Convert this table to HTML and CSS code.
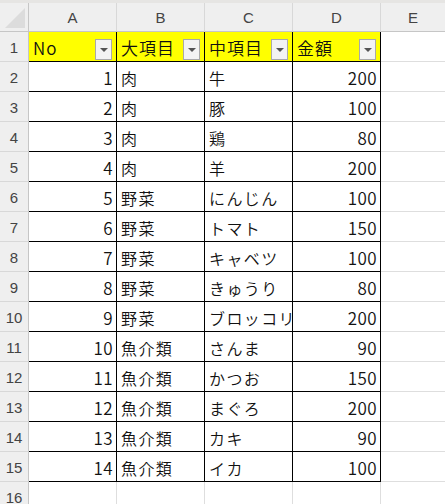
FILE: index.html
```html
<!DOCTYPE html>
<html lang="ja">
<head>
<meta charset="utf-8">
<link rel="stylesheet" href="styles.css">
</head>
<body>
<div class="topstrip"></div>
<div class="sheet">
  <div class="corner"><span class="tri"></span></div>
  <div class="colhead">A</div>
  <div class="colhead">B</div>
  <div class="colhead">C</div>
  <div class="colhead">D</div>
  <div class="colhead last">E</div>

  <div class="rowhead">1</div>
  <div class="cell hdr">No<span class="dd"></span></div>
  <div class="cell hdr">大項目<span class="dd"></span></div>
  <div class="cell hdr">中項目<span class="dd"></span></div>
  <div class="cell hdr">金額<span class="dd"></span></div>
  <div class="cell empty"></div>

  <div class="rowhead">2</div><div class="cell num">1</div><div class="cell">肉</div><div class="cell">牛</div><div class="cell num">200</div><div class="cell empty"></div>
  <div class="rowhead">3</div><div class="cell num">2</div><div class="cell">肉</div><div class="cell">豚</div><div class="cell num">100</div><div class="cell empty"></div>
  <div class="rowhead">4</div><div class="cell num">3</div><div class="cell">肉</div><div class="cell">鶏</div><div class="cell num">80</div><div class="cell empty"></div>
  <div class="rowhead">5</div><div class="cell num">4</div><div class="cell">肉</div><div class="cell">羊</div><div class="cell num">200</div><div class="cell empty"></div>
  <div class="rowhead">6</div><div class="cell num">5</div><div class="cell">野菜</div><div class="cell">にんじん</div><div class="cell num">100</div><div class="cell empty"></div>
  <div class="rowhead">7</div><div class="cell num">6</div><div class="cell">野菜</div><div class="cell">トマト</div><div class="cell num">150</div><div class="cell empty"></div>
  <div class="rowhead">8</div><div class="cell num">7</div><div class="cell">野菜</div><div class="cell">キャベツ</div><div class="cell num">100</div><div class="cell empty"></div>
  <div class="rowhead">9</div><div class="cell num">8</div><div class="cell">野菜</div><div class="cell">きゅうり</div><div class="cell num">80</div><div class="cell empty"></div>
  <div class="rowhead">10</div><div class="cell num">9</div><div class="cell">野菜</div><div class="cell">ブロッコリー</div><div class="cell num">200</div><div class="cell empty"></div>
  <div class="rowhead">11</div><div class="cell num">10</div><div class="cell">魚介類</div><div class="cell">さんま</div><div class="cell num">90</div><div class="cell empty"></div>
  <div class="rowhead">12</div><div class="cell num">11</div><div class="cell">魚介類</div><div class="cell">かつお</div><div class="cell num">150</div><div class="cell empty"></div>
  <div class="rowhead">13</div><div class="cell num">12</div><div class="cell">魚介類</div><div class="cell">まぐろ</div><div class="cell num">200</div><div class="cell empty"></div>
  <div class="rowhead">14</div><div class="cell num">13</div><div class="cell">魚介類</div><div class="cell">カキ</div><div class="cell num">90</div><div class="cell empty"></div>
  <div class="rowhead">15</div><div class="cell num">14</div><div class="cell">魚介類</div><div class="cell">イカ</div><div class="cell num">100</div><div class="cell empty"></div>

  <div class="rowhead">16</div>
  <div class="cell blank"></div><div class="cell blank"></div><div class="cell blank"></div><div class="cell blank"></div><div class="cell empty"></div>
</div>
</body>
</html>
```
FILE: styles.css
```css
html, body {
  margin: 0;
  padding: 0;
  background: #ffffff;
  overflow: hidden;
}
body {
  font-family: "Noto Sans CJK JP", "Noto Sans", sans-serif;
  width: 445px;
  height: 504px;
}
.topstrip {
  height: 3px;
  background: #e6e5e3;
}
.sheet {
  display: grid;
  grid-template-columns: 29px 88px 88px 88px 88px 1fr;
  grid-template-rows: 29px repeat(15, 30px) 30px;
}
.corner {
  background: #efefef;
  border-right: 1px solid #c6c6c6;
  border-bottom: 1px solid #c6c6c6;
  position: relative;
  box-sizing: border-box;
}
.tri {
  position: absolute;
  right: 3px;
  bottom: 3px;
  width: 0;
  height: 0;
  border-left: 20px solid transparent;
  border-bottom: 20px solid #dcdcdc;
}
.colhead {
  background: #efefef;
  color: #444444;
  font-family: "Liberation Sans", "Noto Sans", sans-serif;
  font-size: 15px;
  display: flex;
  align-items: center;
  justify-content: center;
  border-right: 1px solid #d8d8d8;
  border-bottom: 1px solid #c6c6c6;
  box-sizing: border-box;
  padding-top: 1px;
}
.colhead.last {
  border-right: none;
}
.rowhead {
  background: #efefef;
  color: #444444;
  font-family: "Liberation Sans", "Noto Sans", sans-serif;
  font-size: 15px;
  display: flex;
  align-items: center;
  justify-content: center;
  border-right: 1px solid #c6c6c6;
  border-bottom: 1px solid #d8d8d8;
  box-sizing: border-box;
  padding-top: 2px;
}
.cell {
  box-sizing: border-box;
  border-right: 1px solid #000000;
  border-bottom: 1px solid #000000;
  font-size: 16px;
  font-weight: 350;
  letter-spacing: 1.4px;
  color: #111111;
  display: flex;
  align-items: center;
  padding: 2px 3px 0 4px;
  white-space: nowrap;
  overflow: hidden;
  line-height: 1;
  position: relative;
}
.cell.num {
  justify-content: flex-end;
  font-size: 17px;
  letter-spacing: 0.4px;
  padding-right: 3px;
}
.cell.hdr {
  background: #ffff00;
  font-size: 17px;
  letter-spacing: 1px;
}
.cell.empty {
  border-right: none;
  border-bottom: 1px solid #dedede;
}
.cell.blank {
  border-right: 1px solid #dedede;
  border-bottom: 1px solid #dedede;
}
.dd {
  position: absolute;
  right: 4px;
  top: 7px;
  width: 17px;
  height: 21px;
  box-sizing: border-box;
  background: #f3f3f3;
  border: 1px solid #a9a9a9;
}
.dd::after {
  content: "";
  position: absolute;
  left: 4px;
  top: 8px;
  width: 0;
  height: 0;
  border-left: 4px solid transparent;
  border-right: 4px solid transparent;
  border-top: 4px solid #555555;
}
```
